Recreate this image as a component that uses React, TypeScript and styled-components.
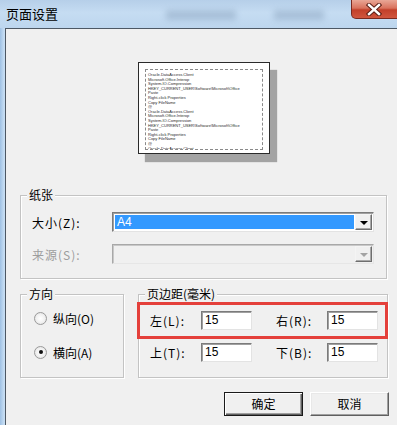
import styled, { createGlobalStyle } from "styled-components";

const GlobalStyle = createGlobalStyle`
  html, body {
    margin: 0;
    padding: 0;
  }
  body {
    width: 397px;
    height: 425px;
    overflow: hidden;
    font-family: "Noto Sans CJK SC", "Liberation Sans", sans-serif;
    font-size: 12px;
    color: #000;
  }
`;

const previewBlock = [
  "Oracle.DataAccess.Client",
  "Microsoft.Office.Interop",
  "System.IO.Compression",
  "HKEY_CURRENT_USER\\Software\\Microsoft\\Office",
  "Paste",
  "Right-click Properties",
  "Copy FileName",
  "@",
];

const previewLines = [...previewBlock, ...previewBlock, previewBlock[0]];

const Window = styled.div`
  width: 397px;
  height: 425px;
  display: flex;
  flex-direction: column;
  background: linear-gradient(90deg, #9fc1e4 0, #c6ddf3 4px);
`;

const TitleBar = styled.div`
  height: 28px;
  display: flex;
  align-items: flex-start;
  background: linear-gradient(180deg, #b6cfe9 0%, #c5dcf2 45%, #bdd6ee 100%);
`;

const Title = styled.div`
  padding: 5px 0 0 6px;
  font-size: 13px;
  line-height: 17px;
  color: #000;
`;

const Blur = styled.div<{ $w: number; $ml: number }>`
  width: ${(p) => p.$w}px;
  height: 10px;
  margin: 10px 0 0 ${(p) => p.$ml}px;
  background: #90a9c4;
  filter: blur(3px);
  opacity: 0.55;
`;

const CloseButton = styled.div`
  margin-left: auto;
  margin-right: -6px;
  width: 52px;
  height: 19px;
  box-sizing: border-box;
  border: 1px solid #7a2a20;
  border-top: none;
  border-radius: 0 0 0 5px;
  background: linear-gradient(180deg, #e9a796 0%, #d9725d 45%, #c2402a 55%, #d0563e 100%);
  display: flex;
  align-items: center;
  justify-content: center;
  padding-right: 6px;
`;

const Client = styled.div`
  flex: 1;
  margin-left: 5px;
  border-top: 1px solid #4d5864;
  border-left: 1px solid #4d5864;
  background: #f0f0f0;
  padding-left: 14px;
`;

const Preview = styled.div`
  height: 166px;
  box-sizing: border-box;
  padding: 33px 0 0 118px;
`;

const Page = styled.div`
  width: 132px;
  height: 92px;
  box-sizing: border-box;
  border: 1px solid #2a2a2a;
  background: #fff;
  box-shadow: 7px 8px 1px #a3a3a3;
  padding: 6px 6px 3px 6px;
`;

const PageMargin = styled.div`
  height: 100%;
  box-sizing: border-box;
  border: 1px dashed #8a8a8a;
  padding: 3px 2px;
  overflow: hidden;
`;

const PreviewLine = styled.div`
  font-family: "Liberation Sans", sans-serif;
  font-size: 4px;
  line-height: 4.6px;
  height: 4.6px;
  white-space: nowrap;
  color: #2a2a2a;
`;

const Group = styled.div<{ $w: number }>`
  position: relative;
  width: ${(p) => p.$w}px;
  height: 84px;
  box-sizing: border-box;
  border: 1px solid #c3c3c3;
  box-shadow: inset 1px 1px #fff, 1px 1px #fff;
`;

const Legend = styled.div`
  position: absolute;
  top: -9px;
  left: 6px;
  padding: 0 2px;
  background: #f0f0f0;
  line-height: 16px;
  font-size: 12px;
`;

const PaperBody = styled.div`
  display: flex;
  flex-direction: column;
  gap: 12px;
  padding: 16px 0 0 11px;
`;

const FieldRow = styled.div`
  display: flex;
  align-items: center;
  height: 20px;
`;

const FieldLabel = styled.span<{ $disabled?: boolean; $w: number }>`
  width: ${(p) => p.$w}px;
  flex-shrink: 0;
  letter-spacing: 1px;
  color: ${(p) => (p.$disabled ? "#9d9d9d" : "#000")};
`;

const Combo = styled.div<{ $disabled?: boolean }>`
  width: 262px;
  height: 20px;
  box-sizing: border-box;
  display: flex;
  border: 1px solid;
  border-color: ${(p) =>
    p.$disabled ? "#a8a8a8 #e6e6e6 #e6e6e6 #a8a8a8" : "#7b7b7b #e3e3e3 #e3e3e3 #7b7b7b"};
  box-shadow: inset 1px 1px ${(p) => (p.$disabled ? "#c8c8c8" : "#a0a0a0")};
  background: ${(p) => (p.$disabled ? "#f0f0f0" : "#fff")};
  padding: 1px 1px 1px 2px;
`;

const ComboValue = styled.div<{ $selected?: boolean }>`
  flex: 1;
  margin: 1px 1px 1px 0;
  padding-left: 2px;
  background: ${(p) => (p.$selected ? "#3399ff" : "transparent")};
  color: #fff;
  font-family: "Liberation Sans", sans-serif;
  font-size: 12px;
  line-height: 14px;
`;

const DropButton = styled.div<{ $disabled?: boolean }>`
  width: 17px;
  height: 16px;
  box-sizing: border-box;
  border: 1px solid;
  border-color: #f4f4f4 #6e6e6e #6e6e6e #f4f4f4;
  box-shadow: inset -1px -1px #a8a8a8;
  background: #f0f0f0;
  display: flex;
  align-items: center;
  justify-content: center;
  &::after {
    content: "";
    border-left: 4px solid transparent;
    border-right: 4px solid transparent;
    border-top: 4px solid ${(p) => (p.$disabled ? "#a3a3a3" : "#000")};
    margin-top: 1px;
  }
`;

const BottomRow = styled.div`
  display: flex;
  margin-top: 15px;
  gap: 14px;
`;

const RadioBody = styled.div`
  display: flex;
  flex-direction: column;
  gap: 14px;
  padding: 13px 0 0 13px;
`;

const RadioRow = styled.div`
  display: flex;
  align-items: center;
  gap: 6px;
  height: 20px;
`;

const RadioCircle = styled.span<{ $checked?: boolean }>`
  width: 13px;
  height: 13px;
  box-sizing: border-box;
  border-radius: 50%;
  border: 1px solid #9a9a9a;
  background: radial-gradient(circle at 50% 50%, #ffffff 0%, #f2f2f2 50%, #d9d9d9 100%);
  display: flex;
  align-items: center;
  justify-content: center;
  &::after {
    content: "";
    width: 4px;
    height: 4px;
    border-radius: 50%;
    background: ${(p) => (p.$checked ? "#111" : "transparent")};
  }
`;

const MarginBody = styled.div`
  display: flex;
  flex-direction: column;
  gap: 14px;
  padding: 16px 0 0 11px;
`;

const MarginRow = styled.div`
  display: flex;
  gap: 24px;
`;

const Pair = styled.div`
  display: flex;
  align-items: center;
  height: 18px;
`;

const NumberBox = styled.div`
  width: 51px;
  height: 19px;
  box-sizing: border-box;
  border: 1px solid;
  border-color: #7b7b7b #e3e3e3 #e3e3e3 #7b7b7b;
  box-shadow: inset 1px 1px #a0a0a0;
  background: #fff;
  padding-left: 3px;
  font-family: "Liberation Sans", sans-serif;
  font-size: 12px;
  line-height: 17px;
`;

const Highlight = styled.div`
  position: absolute;
  top: 7px;
  left: -2px;
  width: 251px;
  height: 37px;
  box-sizing: border-box;
  border: 3px solid #e4403b;
  pointer-events: none;
`;

const ButtonRow = styled.div`
  display: flex;
  gap: 7px;
  margin-top: 14px;
  padding-left: 204px;
`;

const DialogButton = styled.div<{ $default?: boolean }>`
  width: 79px;
  height: 24px;
  box-sizing: border-box;
  border: 1px solid;
  border-color: ${(p) => (p.$default ? "#1a1a1a" : "#ffffff #5f5f5f #5f5f5f #ffffff")};
  box-shadow: ${(p) =>
    p.$default
      ? "inset 1px 1px #fff, inset -1px -1px #5f5f5f, inset -2px -2px #a0a0a0"
      : "inset -1px -1px #a0a0a0, inset 1px 1px #e8e8e8"};
  background: #f0f0f0;
  display: flex;
  align-items: center;
  justify-content: center;
  font-size: 12px;
  line-height: 14px;
`;

const App = () => {
  return (
    <>
      <GlobalStyle />
      <Window>
        <TitleBar>
          <Title>页面设置</Title>
          <Blur $w={70} $ml={108} />
          <Blur $w={50} $ml={38} />
          <CloseButton>
            <svg width="16" height="13" viewBox="0 0 16 13">
              <path
                d="M3 2 L13 11 M13 2 L3 11"
                stroke="#5b1e15"
                strokeWidth="4.4"
                strokeLinecap="square"
              />
              <path
                d="M3 2 L13 11 M13 2 L3 11"
                stroke="#ffffff"
                strokeWidth="2.4"
                strokeLinecap="square"
              />
            </svg>
          </CloseButton>
        </TitleBar>
        <Client>
          <Preview>
            <Page>
              <PageMargin>
                {previewLines.map((line, i) => (
                  <PreviewLine key={i}>{line}</PreviewLine>
                ))}
              </PageMargin>
            </Page>
          </Preview>

          <Group $w={367}>
            <Legend>纸张</Legend>
            <PaperBody>
              <FieldRow>
                <FieldLabel $w={80}>大小(Z):</FieldLabel>
                <Combo>
                  <ComboValue $selected>A4</ComboValue>
                  <DropButton />
                </Combo>
              </FieldRow>
              <FieldRow>
                <FieldLabel $w={80} $disabled>
                  来源(S):
                </FieldLabel>
                <Combo $disabled>
                  <ComboValue />
                  <DropButton $disabled />
                </Combo>
              </FieldRow>
            </PaperBody>
          </Group>

          <BottomRow>
            <Group $w={104}>
              <Legend>方向</Legend>
              <RadioBody>
                <RadioRow>
                  <RadioCircle />
                  <span>纵向(O)</span>
                </RadioRow>
                <RadioRow>
                  <RadioCircle $checked />
                  <span>横向(A)</span>
                </RadioRow>
              </RadioBody>
            </Group>

            <Group $w={250}>
              <Legend>页边距(毫米)</Legend>
              <MarginBody>
                <MarginRow>
                  <Pair>
                    <FieldLabel $w={51}>左(L):</FieldLabel>
                    <NumberBox>15</NumberBox>
                  </Pair>
                  <Pair>
                    <FieldLabel $w={51}>右(R):</FieldLabel>
                    <NumberBox>15</NumberBox>
                  </Pair>
                </MarginRow>
                <MarginRow>
                  <Pair>
                    <FieldLabel $w={51}>上(T):</FieldLabel>
                    <NumberBox>15</NumberBox>
                  </Pair>
                  <Pair>
                    <FieldLabel $w={51}>下(B):</FieldLabel>
                    <NumberBox>15</NumberBox>
                  </Pair>
                </MarginRow>
              </MarginBody>
              <Highlight />
            </Group>
          </BottomRow>

          <ButtonRow>
            <DialogButton $default>确定</DialogButton>
            <DialogButton>取消</DialogButton>
          </ButtonRow>
        </Client>
      </Window>
    </>
  );
};

export default App;
